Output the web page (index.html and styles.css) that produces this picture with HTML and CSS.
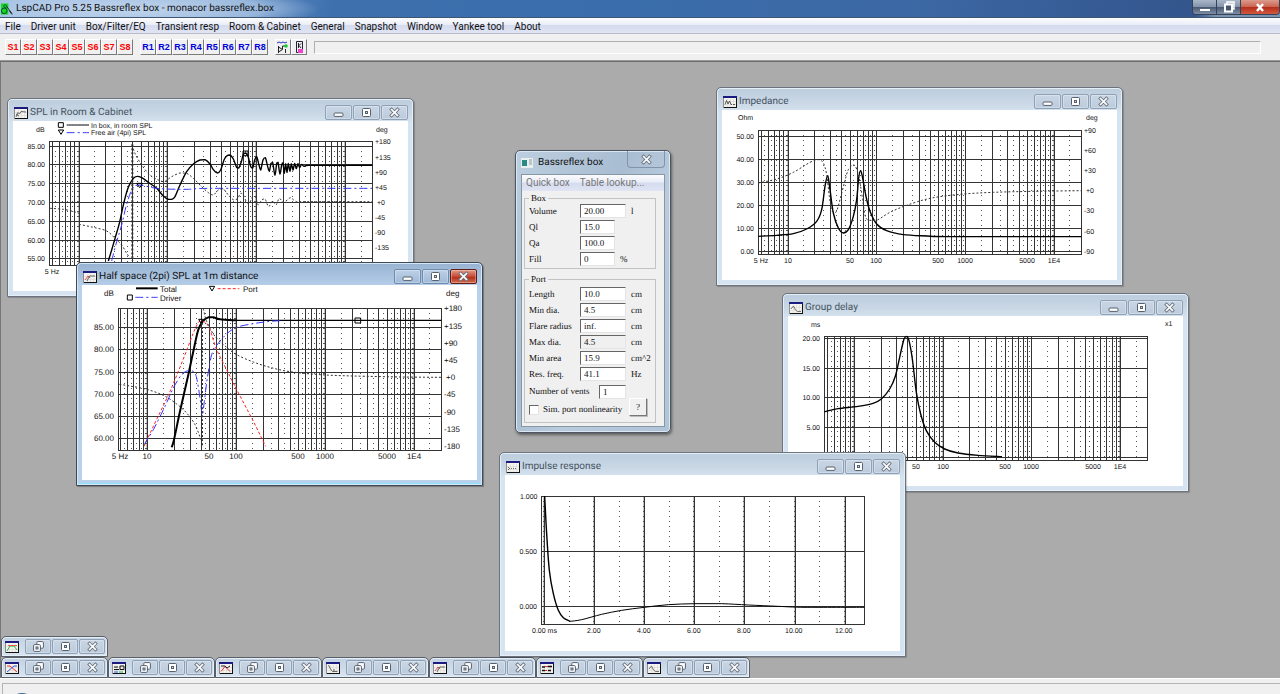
FILE: index.html
```html
<!DOCTYPE html>
<html lang="en">
<head>
<meta charset="utf-8">
<title>LspCAD Pro 5.25 Bassreflex box - monacor bassreflex.box</title>
<link rel="stylesheet" href="styles.css">
</head>
<body>
<svg class="sprites" width="0" height="0" aria-hidden="true">
  <symbol id="g-min" viewBox="0 0 11 11"><rect x="1" y="6" width="9" height="3.4" rx="1" fill="#fff" stroke="#56616f"/></symbol>
  <symbol id="g-max" viewBox="0 0 11 11"><rect x="1.5" y="1.5" width="8" height="8" rx="1" fill="#fff" stroke="#56616f"/><rect x="4.5" y="4.5" width="2" height="2" fill="#c5d3e2" stroke="#56616f"/></symbol>
  <symbol id="g-close" viewBox="0 0 11 11"><path d="M2.600 2.600L8.400 8.400M8.400 2.600L2.600 8.400" stroke="#66717f" stroke-width="3.400" stroke-linecap="square"/><path d="M2.600 2.600L8.400 8.400M8.400 2.600L2.600 8.400" stroke="#fff" stroke-width="1.700" stroke-linecap="square"/></symbol>
  <symbol id="g-restore" viewBox="0 0 11 11"><rect x="3.8" y=".6" width="6.6" height="6.6" rx="1" fill="#fff" stroke="#56616f"/><rect x=".6" y="3.6" width="6.8" height="6.8" rx="1" fill="#fff" stroke="#56616f"/><rect x="3" y="6" width="2" height="2" fill="#c5d3e2" stroke="#56616f"/></symbol>
  <symbol id="i-frame" viewBox="0 0 14 12"><path d="M0 0h14v12H0z" fill="#8d8d8d"/><path d="M1 11h12V1h1v11H1z" fill="#111"/><path d="M1 1h12v10H1z" fill="#f4f3ee"/><path d="M0 0h14v2H0z" fill="#1c1c80"/><path d="M4.5 3v8M7.5 3v8M10.500 3v8M1 5.5h12M1 8.5h12" stroke="#d8d8d8" stroke-width=".6"/></symbol>
  <symbol id="i-room" viewBox="0 0 14 12"><use href="#i-frame"/><path d="M2 10L4 5.500 5.500 7 7 4.500 12 5M2 7l3 2" fill="none" stroke="#444" stroke-width=".8"/></symbol>
  <symbol id="i-half" viewBox="0 0 14 12"><use href="#i-frame"/><path d="M2 9L5 5l2 2" fill="none" stroke="#d33" stroke-width=".8"/><path d="M4 10L6.500 5H12" fill="none" stroke="#444" stroke-width=".8"/></symbol>
  <symbol id="i-imp" viewBox="0 0 14 12"><use href="#i-frame"/><path d="M2 8.500l1.500-4L5 8l1.500-3L8 8.500h1M10 8.500h2" fill="none" stroke="#333" stroke-width=".8"/></symbol>
  <symbol id="i-delay" viewBox="0 0 14 12"><use href="#i-frame"/><path d="M2 7l2.500-3 2 4 2 1.500H12" fill="none" stroke="#555" stroke-width=".8"/></symbol>
  <symbol id="i-impulse" viewBox="0 0 14 12"><use href="#i-frame"/><path d="M2.500 6v4M3 7.500h8" fill="none" stroke="#666" stroke-dasharray="1 1"/></symbol>
  <symbol id="i-green" viewBox="0 0 14 12"><use href="#i-frame"/><path d="M2 10l3-5h4l3 4" fill="none" stroke="#2b4"/><path d="M3 4.500h9" stroke="#e55"/></symbol>
  <symbol id="i-cross" viewBox="0 0 14 12"><use href="#i-frame"/><path d="M2 4h3l7 6" fill="none" stroke="#e33"/><path d="M2 10l7-6h3" fill="none" stroke="#35d"/></symbol>
  <symbol id="i-crossdark" viewBox="0 0 14 12"><use href="#i-frame"/><path d="M2 9.500l4-5 5 5" fill="none" stroke="#e33"/><path d="M2 4h4l2 2 3-2" fill="none" stroke="#223"/></symbol>
  <symbol id="i-circuit" viewBox="0 0 14 12"><use href="#i-frame"/><path d="M2 5h4M2 7.500h5M8 4h4v3.500H8z" fill="none" stroke="#111"/><path d="M2 10h4" stroke="#25d"/><path d="M7 10h4" stroke="#2b4"/></symbol>
  <symbol id="i-decay" viewBox="0 0 14 12"><use href="#i-frame"/><path d="M2.500 3l2 4 2 2.500h5M8 9V7" fill="none" stroke="#444" stroke-width=".8"/></symbol>
  <symbol id="i-list" viewBox="0 0 14 12"><use href="#i-frame"/><path d="M2 5h3M8 4.500h4M2 8.500h3M8 8.500h3" stroke="#111" stroke-width="1.500"/><path d="M5 4.500h3M5 8.500h2" stroke="#d33"/></symbol>
</svg>

<header class="titlebar">
  <svg class="app-icon" viewBox="0 0 14 14"><path d="M1 1l8 0v12H1z" fill="#19d32b"/><circle cx="5.500" cy="4" r="1.500" fill="none" stroke="#063"/><circle cx="4.500" cy="9" r="3" fill="none" stroke="#042"/><path d="M7 4l6 8M10 9l3 4" stroke="#222"/></svg>
  <h1>LspCAD Pro 5.25 Bassreflex box - monacor bassreflex.box</h1>
  <div class="app-controls">
    <button aria-label="Minimize"><svg viewBox="0 0 14 12"><path d="M2 8h10v2H2z" fill="#fff"/></svg></button>
    <button aria-label="Restore"><svg viewBox="0 0 14 12"><path d="M5 1h7v7H5z" fill="none" stroke="#fff" stroke-width="1.500"/><path d="M3 3.500h7v7H3z" fill="#46566c" stroke="#fff" stroke-width="2"/></svg></button>
    <button class="quit" aria-label="Close"><svg viewBox="0 0 14 12"><path d="M4 3l6 7M10 3L4 10" stroke="#fff" stroke-width="2.500"/></svg></button>
  </div>
</header>

<nav class="menubar">
  <button>File</button><button>Driver unit</button><button>Box/Filter/EQ</button><button>Transient resp</button><button>Room &amp; Cabinet</button><button>General</button><button>Snapshot</button><button>Window</button><button>Yankee tool</button><button>About</button>
</nav>

<div class="toolbar">
  <div class="tools store"><button>S1</button><button>S2</button><button>S3</button><button>S4</button><button>S5</button><button>S6</button><button>S7</button><button>S8</button></div>
  <div class="tools recall"><button>R1</button><button>R2</button><button>R3</button><button>R4</button><button>R5</button><button>R6</button><button>R7</button><button>R8</button></div>
  <div class="tools">
    <button aria-label="Filter"><svg viewBox="0 0 14 14"><path d="M1 3l2-1 2 1 2-1 2 1 2-1" fill="none" stroke="#23c"/><path d="M2.500 6v7M2.500 7l4 2.500-4 2.500M6.500 9V6H9M9.500 9v4" fill="none" stroke="#222"/><circle cx="10" cy="6" r="1.800" fill="#1c3"/></svg></button>
    <button aria-label="Cabinet"><svg viewBox="0 0 14 14"><path d="M4.500 1.500h6v11h-6z" fill="#eee" stroke="#223"/><path d="M6.500 3v5M9 3.500L7 5.500 9 8" fill="none" stroke="#222"/><path d="M6 9h5v4H6z" fill="#e4c"/></svg></button>
  </div>
  <div class="readout"></div>
</div>

<main class="workspace" id="workspace">
  <section class="dialog">
    <header class="dialog-bar">
      <svg class="dialog-icon" viewBox="0 0 12 10"><path d="M0 0h12v10H0z" fill="#e9eef0"/><path d="M1 2h5v6H1z" fill="#2a8a84"/><path d="M8 2h3M8 4h3M8 6h3" stroke="#999"/></svg>
      <h2>Bassreflex box</h2>
      <button class="dialog-close" aria-label="Close"><svg viewBox="0 0 11 11"><use href="#g-close"/></svg></button>
    </header>
    <div class="dialog-body">
      <nav class="dialog-menu"><button>Quick box</button><button>Table lookup...</button></nav>
      <form>
        <fieldset>
          <legend>Box</legend>
          <div class="row"><label for="vol">Volume</label><input id="vol" value="20.00"><span>l</span></div>
          <div class="row"><label for="ql">Ql</label><input id="ql" class="short" value="15.0"></div>
          <div class="row"><label for="qa">Qa</label><input id="qa" class="short" value="100.0"></div>
          <div class="row"><label for="fill">Fill</label><input id="fill" class="short" value="0"><span>%</span></div>
        </fieldset>
        <fieldset class="port">
          <legend>Port</legend>
          <div class="row"><label for="len">Length</label><input id="len" value="10.0"><span>cm</span></div>
          <div class="row"><label for="mind">Min dia.</label><input id="mind" value="4.5"><span>cm</span></div>
          <div class="row"><label for="flare">Flare radius</label><input id="flare" value="inf."><span>cm</span></div>
          <div class="row"><label for="maxd">Max dia.</label><input id="maxd" class="locked" value="4.5" readonly><span>cm</span></div>
          <div class="row"><label for="area">Min area</label><input id="area" value="15.9"><span>cm^2</span></div>
          <div class="row"><label for="res">Res. freq.</label><input id="res" value="41.1"><span>Hz</span></div>
          <div class="row vents"><label for="vents">Number of vents</label><input id="vents" value="1"></div>
          <div class="row sim"><input type="checkbox" id="sim"><label for="sim">Sim. port nonlinearity</label><button type="button">?</button></div>
        </fieldset>
      </form>
    </div>
  </section>
  <div class="shelf" id="shelf"></div>
</main>
<footer class="statusbar"><div class="status-pane"><span class="orb"></span></div></footer>
<script src="app.js"></script>
</body>
</html>
```
FILE: styles.css
```css
* { box-sizing: border-box; }
body {
  margin: 0;
  height: 100vh;
  display: flex;
  flex-direction: column;
  overflow: hidden;
  background: #f0f0f0;
  color: #111;
  font-family: Roboto, "Noto Sans", sans-serif;
  font-size: 10px;
  text-rendering: geometricPrecision;
}
button { font: inherit; color: inherit; padding: 0; margin: 0; border: 0; background: none; }
h1, h2 { margin: 0; font-weight: 400; }
.sprites { position: absolute; }

.titlebar {
  flex: none;
  height: 18px;
  display: flex;
  align-items: center;
  gap: 3px;
  background:
    radial-gradient(ellipse 190px 22px at 130px 9px, rgba(205, 222, 242, .85) 0%, rgba(190, 212, 238, .6) 70%, transparent 100%),
    linear-gradient(100deg, #8fb2da 0, #6f9acb 200px, #3e70ae 330px, #3a6dab 620px, #3c68a4 900px, #33558c 1180px, #7f93ad 1200px);
  border-bottom: 1px solid #3d5673;
}
.app-icon { width: 13px; height: 14px; }
.titlebar h1 { flex: 1; font-size: 10px; line-height: 16px; }
.app-controls { display: flex; align-self: flex-start; border: 1px solid #33435a; border-top: 0; border-radius: 0 0 4px 4px; overflow: hidden; }
.app-controls button { width: 24px; height: 14px; display: grid; place-items: center; background: linear-gradient(#a9b7c9, #8494aa 48%, #475870 50%, #7d8ea6); border-right: 1px solid #33435a; }
.app-controls svg { width: 14px; height: 12px; }
.app-controls .quit { width: 38px; border: 0; background: linear-gradient(#dc9a8c, #cb6552 48%, #b32d18 50%, #d2583f); }

.menubar {
  flex: none;
  height: 16px;
  display: flex;
  gap: 10px;
  padding-left: 5px;
  background: linear-gradient(#fdfdfe, #e9edf7 45%, #d5dcef 50%, #e0e4f3);
  border-bottom: 1px solid #b9bccb;
}
.menubar button { line-height: 18px; white-space: nowrap; }

.toolbar {
  flex: none;
  height: 27px;
  display: flex;
  align-items: center;
  gap: 7px;
  padding: 0 19px 0 5px;
  background: #f0f0f0;
  border-bottom: 1px solid #9a9a9a;
}
.tools { display: flex; font: bold 9px/14px "Liberation Sans", sans-serif; }
.tools button { width: 16px; height: 16px; border: 1px solid; border-color: #fff #7a7a7a #7a7a7a #fff; display: grid; place-items: center; }
.tools svg { width: 14px; height: 14px; }
.store { color: #f00; }
.recall { color: #00d; }
.readout { flex: 1; height: 13px; border: 1px solid; border-color: #b0b0b0 #fff #fff #b0b0b0; }

.workspace { flex: 1; position: relative; min-height: 0; overflow: hidden; background: #ababab; border-top: 1px solid #6d6d6d; border-left: 1px solid #777; }

.mdi {
  position: absolute;
  border: 1px solid #6b747e;
  border-radius: 5px 5px 0 0;
  padding: 0 5px 5px;
  background: linear-gradient(#bccddd, #c9d7e5 14px, #d6e3f1 24px);
  box-shadow: inset 0 0 0 1px #e6eff8, 1px 1px 1px rgba(0, 0, 0, .2);
  color: #44535f;
}
.mdi.active { background: linear-gradient(#98b3d1, #a9c3e0 14px, #b9d1ea 24px); border-color: #3f4a56; box-shadow: inset 0 0 0 1px #d5e8f8, inset 0 -2px 0 #8ce0f7, 1px 1px 1px rgba(0, 0, 0, .3); color: #111; }
.mdi-bar { height: 22px; display: flex; align-items: center; gap: 2px; padding: 5px 0 0 1px; }
.mdi-bar h2 { flex: 1; font-size: 10px; line-height: 16px; }
.mdi-icon { width: 14px; height: 12px; flex: none; }
.glass { display: flex; gap: 1px; }
.glass button { width: 27px; height: 15px; display: grid; place-items: center; border: 1px solid #8fa1b6; border-radius: 2px; background: linear-gradient(#c9d6e4, #bccbdc); box-shadow: inset 0 0 0 1px rgba(255, 255, 255, .3); }
.glass svg { width: 11px; height: 11px; }
.active .glass button { background: linear-gradient(#bdd1e7, #9fb9d7); border-color: #6f8bab; }
.active .glass button:last-child { background: linear-gradient(#e29a88, #c64a34 50%, #b02d18 52%, #d46a4c); border-color: #5e1c14; }
.chart { display: block; background: #fff; }
.chart text { font-family: "Liberation Sans", sans-serif; font-size: 7px; fill: #111; }
.chart.large text { font-size: 8px; }
.start { text-anchor: start; }
.middle { text-anchor: middle; }
.end { text-anchor: end; }
.grid { fill: none; stroke: #333; stroke-width: 1; shape-rendering: crispEdges; }
.dots { fill: none; stroke: #555; stroke-width: 1; stroke-dasharray: 1 4; shape-rendering: crispEdges; }
.halo { fill: none; stroke: #c2c2c2; stroke-width: 1; shape-rendering: crispEdges; }
.curve { fill: none; vector-effect: non-scaling-stroke; stroke: #000; stroke-width: 1px; }
.heavy { stroke-width: 1.4px; }
.thick { stroke-width: 2px; }
.phase { stroke: #333; stroke-dasharray: 2 2; }
.blue { stroke: #33f; stroke-dasharray: 8 3 2 3; }
.red { stroke: #f22; stroke-dasharray: 3 2; }
.mark { stroke: #000; fill: none; vector-effect: non-scaling-stroke; }

.dialog {
  position: absolute;
  left: 514px;
  top: 88px;
  width: 156px;
  border: 1px solid #4b5662;
  border-radius: 5px;
  padding: 0 5px 5px;
  background: linear-gradient(115deg, #bccfe0, #a9bdd2 40%, #b9cbdd 60%, #b0c4d8);
  box-shadow: inset 0 0 0 1px #dbe8f3, 1px 2px 3px rgba(0, 0, 0, .45);
}
.dialog-bar { height: 23px; display: flex; align-items: center; gap: 5px; }
.dialog-bar h2 { flex: 1; font-size: 10px; }
.dialog-icon { width: 12px; height: 10px; }
.dialog-close { align-self: flex-start; width: 38px; height: 17px; display: grid; place-items: center; border: 1px solid #8194a9; border-top: 0; border-radius: 0 0 4px 4px; }
.dialog-close svg { width: 11px; height: 11px; }
.dialog-body { background: #f0f0f0; border: 1px solid #8897a6; padding-bottom: 3px; }
.dialog-menu { display: flex; gap: 10px; height: 16px; padding-left: 4px; color: #777; background: linear-gradient(#fbfbfd, #e9edf7 45%, #d5dcef 50%, #e0e4f3); }
.dialog-menu button { line-height: 16px; }
.dialog form { display: flex; flex-direction: column; gap: 5px; padding: 2px 8px 0 2px; font: 9px/11px "Liberation Serif", serif; }
fieldset { margin: 0; min-width: 0; border: 1px solid #c3c3c3; padding: 0 4px 1px; }
fieldset.port { padding: 2px 4px 4px; }
legend { padding: 0 2px; margin-left: 0; line-height: 10px; }
.row { display: flex; align-items: center; height: 16px; }
.row label { width: 51px; }
.row span { margin-left: 5px; }
.row input { width: 46px; height: 14px; padding: 0 0 0 3px; margin: 0; border: 1px solid; border-color: #666 #e4e4e4 #e4e4e4 #666; border-radius: 0; background: #fff; font: inherit; color: inherit; }
.row .short { width: 35px; }
.row .locked { background: #f0f0f0; }
.row.vents { height: 19px; }
.vents label { width: 70px; }
.row.vents input { width: 27px; }
.row.sim { gap: 4px; height: 17px; }
.row.sim label { width: auto; flex: 1; white-space: nowrap; }
.row.sim input { appearance: none; width: 10px; height: 10px; padding: 0; flex: none; }
.sim button { width: 18px; height: 18px; margin: 0 4px 5px 0; border: 1px solid; border-color: #fff #777 #777 #fff; box-shadow: 1px 1px 0 #bbb; }

.shelf { position: absolute; left: 0; bottom: 0; display: flex; flex-direction: column; }
.shelf-row { display: flex; }
.mini { width: 107px; height: 21px; display: flex; align-items: center; gap: 3px; padding: 0 3px; border: 1px solid #5a6068; border-radius: 5px 5px 0 0; background: linear-gradient(#c3d2e1, #d8e4f1); box-shadow: inset 0 0 0 1px #e6eff8; }
.mini i { width: 1px; height: 7px; background: #a59a88; }
.mini .glass { margin-left: auto; }
.mini .glass button { width: 26px; }

.statusbar { flex: none; height: 16px; padding: 4px 0 0 2px; background: #f0f0f0; border-top: 1px solid #fff; }
.status-pane { height: 100%; border-top: 1px solid #b5b5b5; border-left: 1px solid #b5b5b5; overflow: hidden; }
.orb { display: block; width: 26px; height: 26px; margin: 9px 0 0 6px; border-radius: 50%; background: #3d6a94; }
```
FILE: app.js
```js
const S = 3; // drawing units per pixel

const windows = [
  { title: 'SPL in Room & Cabinet', icon: 'room', left: 6, top: 36, height: 170, origin: [39, 78],
    plot: [148, 140, 1117, 512], decades: [237, 503, 770, 1037], rows: [153, 209, 266, 323, 380, 436, 491], ticks: [5],
    left_labels: ['85.00', '80.00', '75.00', '70.00', '65.00', '60.00', '55.00'],
    right_labels: [['+180', 140], ['+135', 187], ['+90', 232], ['+45', 277], ['+0', 323], ['-45', 367], ['-90', 412], ['-135', 457]],
    notes: [['dB', 108, 102], ['deg', 1130, 103], ['In box, in room SPL', 275, 90], ['Free air (4pi) SPL', 275, 112]],
    marks: 'M175 83h15v14h-15zM175 105h16l-8 13zM410 265h18l-9 13zM729 168h15v14h-15z',
    curves: [
      ['', '200,90 267,90'], ['blue', '200,113 267,113'],
      ['heavy', '325,498 335,465 345,430 358,385 370,330 382,285 392,262 402,248 412,244 425,248 445,262 470,280 490,303 505,313 515,313 525,305 540,270 560,230 580,207 600,195 615,194 630,207 640,224 652,234 662,225 672,195 680,183 690,180 700,192 710,217 716,219 724,200 730,178 737,174 744,184 752,214 758,219 764,195 770,185 777,210 782,225 789,195 796,188 803,215 808,229 813,205 818,203 825,241 830,205 834,202 840,237 845,210 849,203 853,235 857,206 861,233 865,205 870,229 874,206 879,225 884,205 889,221 894,206 899,218 905,208 912,214 925,211 1117,211'],
      ['blue', '335,498 350,440 365,390 378,335 392,292 405,272 420,270 440,274 480,281 560,283 640,280 1117,280'],
      ['phase', '150,340 190,343 222,350 237,355'], ['phase', '237,388 280,397 320,408 345,430 365,450 380,475 392,492'], ['phase thick', '397,148 397,498'],
      ['phase', '397,150 405,175 425,210 450,240 475,255 493,260 515,245 540,234 560,235 580,250 605,275 625,293 640,300 655,285 670,282 685,300 700,314 712,312 722,295 730,300 740,322 748,325 758,305 766,305 775,330 785,315 795,312 806,335 818,318 828,330 838,310 850,322 862,315 872,308 885,318 900,320 1117,320']
    ] },
  { title: 'Half space (2pi) SPL at 1m distance', icon: 'half', left: 75, top: 200, height: 195, origin: [36, 81], active: true, large: true,
    plot: [145, 152, 1114, 576], decades: [233, 499, 766, 1033], rows: [208, 275, 342, 409, 475, 541],
    left_labels: ['85.00', '80.00', '75.00', '70.00', '65.00', '60.00'],
    right_labels: [['+180', 152], ['+135', 204], ['+90', 256], ['+45', 307], ['+0', 358], ['-45', 410], ['-90', 462], ['-135', 514], ['-180', 565]],
    notes: [['dB', 102, 106], ['deg', 1128, 107], ['Total', 271, 94], ['Driver', 271, 120], ['Port', 519, 94]],
    marks: 'M172 111h15v15h-15zM418 85h16l-8 14zM386 184h15l-8 12zM855 180h17v15h-17z',
    curves: [
      ['thick', '198,91 263,91'], ['blue', '196,118 263,118'], ['red', '443,92 508,92'],
      ['thick', '305,568 312,545 330,460 355,350 370,280 385,215 400,188 415,178 430,178 450,184 500,187'], ['heavy', '500,187 1114,187'],
      ['red', '222,565 250,505 300,400 345,290 370,225 388,190 405,192 420,215 440,275 475,345 500,395 550,490 587,565'],
      ['blue', '222,560 250,515 285,445 310,390 335,350 355,338 370,340 380,360 390,420 397,470 403,430 412,360 425,290 440,262 470,228 500,208 550,197 600,190 640,188'],
      ['phase', '148,379 180,384 230,394 280,412 320,438 350,465 375,500 393,545'], ['phase thick', '396,195 396,565'],
      ['phase', '400,152 410,190 435,235 470,268 500,290 550,312 600,328 660,341 750,350 850,354 1000,357 1114,358']
    ] },
  { title: 'Impedance', icon: 'imp', left: 715, top: 25, height: 170, origin: [36, 81],
    plot: [145, 141, 1114, 513], decades: [234, 501, 768, 1033], rows: [160, 229, 298, 367, 436, 504],
    left_labels: ['50.00', '40.00', '30.00', '20.00', '10.00', '0.00'],
    right_labels: [['+90', 142], ['+60', 201], ['+30', 263], ['+0', 323], ['-30', 383], ['-60', 444], ['-90', 504]],
    notes: [['Ohm', 86, 104], ['deg', 1128, 104]],
    curves: [
      ['heavy', '145,460 200,457 250,452 290,438 320,415 335,380 345,310 353,278 360,320 370,390 385,435 400,450 415,440 430,400 440,350 446,285 452,263 458,285 468,340 480,385 500,423 530,443 580,455 650,459 720,461 1114,461'],
      ['phase', '145,300 200,288 250,268 300,238 325,230 340,240 350,275 358,340 366,385 378,388 390,350 403,300 415,260 430,246 440,258 450,300 458,350 466,400 478,412 500,412 540,388 590,367 660,346 750,334 850,328 970,325 1114,323']
    ] },
  { title: 'Group delay', icon: 'delay', left: 781, top: 231, height: 170, origin: [30, 81],
    plot: [139, 141, 1108, 514], decades: [229, 495, 762, 1028], rows: [147, 237, 326, 415, 505], ticks: [50, 100, 500, 1000, 5000, 10000],
    left_labels: ['20.00', '15.00', '10.00', '5.00'], right_labels: [],
    notes: [['ms', 101, 105], ['x1', 1163, 103]],
    curves: [['heavy', '139,368 180,359 240,352 285,343 310,330 335,300 352,262 365,205 378,150 386,142 393,155 403,210 415,310 428,375 445,425 470,460 500,480 540,492 600,499 672,503']] },
  { title: 'Impulse response', icon: 'impulse', left: 498, top: 390, height: 176, origin: [30, 84],
    plot: [139, 147, 1108, 532], solid: [149, 298, 448, 598, 749, 900, 1050], dotted: [224, 374, 524, 674, 824, 974], rows: [314, 478],
    left_labels: ['0.500', '0.000'], right_labels: [],
    notes: [['1.000', 75, 147], ['0.00 ms', 111, 549], ...['2.00', '4.00', '6.00', '8.00'].map((t, i) => [t, 277 + i * 150, 549]), ['10.00', 872, 549], ['12.00', 1022, 549]],
    curves: [['heavy', '149,147 155,260 163,370 175,440 190,490 205,512 225,523'], ['', '225,523 260,518 320,502 380,490 448,481 520,473 600,470 680,470 760,474 850,478 930,481 1108,481']] }
];

// Catmull-Rom spline through the given points
function spline(list) {
  const p = list.split(' ').map(s => s.split(',').map(Number));
  let d = `M${p[0]}`;
  for (let i = 0; i < p.length - 1; i++) {
    const a = p[i - 1] || p[i], b = p[i], c = p[i + 1], e = p[i + 2] || c;
    const lim = (v, lo, hi) => Math.max(Math.min(lo, hi), Math.min(Math.max(lo, hi), v));
    const x1 = lim(b[0] + (c[0] - a[0]) / 6, b[0], c[0]), y1 = lim(b[1] + (c[1] - a[1]) / 6, b[1], c[1]);
    const x2 = lim(c[0] - (e[0] - b[0]) / 6, b[0], c[0]), y2 = lim(c[1] - (e[1] - b[1]) / 6, b[1], c[1]);
    d += `C${x1} ${y1} ${x2} ${y2} ${c}`;
  }
  return d;
}

function tickName(f) {
  return f === 5 ? '5 Hz' : f === 10000 ? '1E4' : String(f);
}

function chart(w) {
  const [ox, oy] = w.origin;
  const X = v => Math.floor((v - ox) / S), Y = v => Math.floor((v - oy) / S);
  const [l, t, r, b] = w.plot;
  const solid = w.solid || [], dotted = w.dotted || [];
  let labels = '';
  const text = (s, x, y, cls) => { labels += `<text class="${cls}" x="${X(x)}" y="${Y(y) + 3}">${s}</text>`; };
  if (w.decades) {
    const step = (w.decades[3] - w.decades[0]) / 3;
    const at = f => w.decades[0] + step * Math.log10(f / 10);
    for (let m = 1; m <= 10000; m *= 10) {
      for (let k = 1; k < 10; k++) {
        if (m * k >= 5 && m * k < 20000) solid.push(at(m * k));
        if (m * (k + .5) >= 5 && m * (k + .5) < 20000) dotted.push(at(m * (k + .5)));
      }
    }
    (w.ticks || [5, 10, 50, 100, 500, 1000, 5000, 10000]).forEach(f => text(tickName(f), at(f), b + 18, 'middle'));
  }
  w.left_labels.forEach((s, i) => text(s, l - 12, w.rows[i], 'end'));
  w.right_labels.forEach(([s, y]) => text(s, s === '+0' ? r + 16 : r + 10, y, 'start'));
  w.notes.forEach(([s, x, y]) => text(s, x, y, 'start'));
  const v = x => `M${X(x) + .5} ${Y(t)}V${Y(b)}`;
  const grid = `M${X(l) + .5} ${Y(t) + .5}H${X(r) + .5}V${Y(b) + .5}H${X(l) + .5}z` +
    solid.map(v).join('') + w.rows.map(y => `M${X(l)} ${Y(y) + .5}H${X(r)}`).join('');
  const wide = w.decades || w.solid;
  return `<svg class="chart${w.large ? ' large' : ''}" width="395" height="${w.height}" viewBox="0 0 395 ${w.height}" role="img" aria-label="${w.title.replace('&', '&amp;')}">
    <path class="halo" d="${wide.map(x => `M${X(x) - .5} ${Y(t)}V${Y(b)}`).join('')}"/>
    <path class="dots" d="${[...dotted, ...wide.map(x => x - S)].map(x => `M${X(x) + .5} ${Y(t) + 5}V${Y(b)}`).join('')}"/>
    <path class="grid" d="${grid}"/>
    <g transform="scale(${1 / S}) translate(${-ox} ${-oy})">
    ${w.curves.map(([c, pts]) => `<path class="curve ${c}" d="${spline(pts)}"/>`).join('')}
    ${w.marks ? `<path class="mark" d="${w.marks}"/>` : ''}</g>${labels}</svg>`;
}

const glass = (...names) => `<div class="glass">${names.map(([id, label]) =>
  `<button aria-label="${label}"><svg viewBox="0 0 11 11"><use href="#g-${id}"/></svg></button>`).join('')}</div>`;

const workspace = document.getElementById('workspace');
const shelf = document.getElementById('shelf');
windows.forEach(w => {
  const el = document.createElement('section');
  el.className = 'mdi' + (w.active ? ' active' : '');
  el.style.left = w.left + 'px';
  el.style.top = w.top + 'px';
  el.innerHTML = `<header class="mdi-bar"><svg class="mdi-icon" viewBox="0 0 14 12"><use href="#i-${w.icon}"/></svg>
    <h2>${w.title.replace('&', '&amp;')}</h2>${glass(['min', 'Minimize'], ['max', 'Maximize'], ['close', 'Close'])}</header>${chart(w)}`;
  workspace.append(el);
});

shelf.innerHTML = [['green'], ['cross', 'circuit', 'crossdark', 'decay', 'half', 'list', 'delay']].map(row =>
  `<div class="shelf-row">${row.map(icon => `<div class="mini"><svg class="mdi-icon" viewBox="0 0 14 12"><use href="#i-${icon}"/></svg><i></i>${
    glass(['restore', 'Restore'], ['max', 'Maximize'], ['close', 'Close'])}</div>`).join('')}</div>`).join('');
```
